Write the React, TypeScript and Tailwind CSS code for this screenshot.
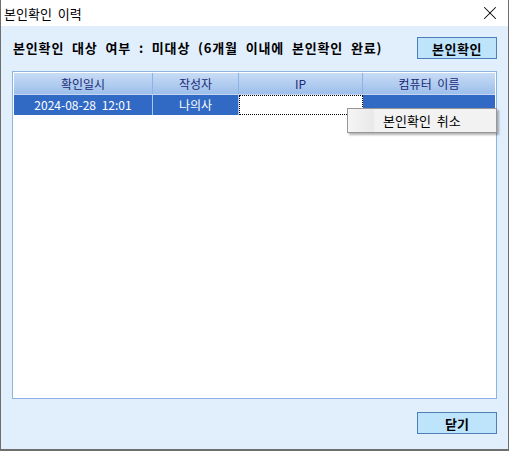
import { X } from 'lucide-react';

const font = { fontFamily: '"Noto Sans CJK KR", "Liberation Sans", sans-serif' };

export default function App() {
  const columns = [
    { label: '확인일시', width: 'w-[139px]' },
    { label: '작성자', width: 'w-[86px]' },
    { label: 'IP', width: 'w-[124px]' },
    { label: '컴퓨터 이름', width: 'flex-1' },
  ];

  return (
    <div
      className="w-[509px] h-[451px] flex flex-col bg-white border border-t-0 border-[#6e6e6e] text-black [word-spacing:3px]"
      style={font}
    >
      {/* Title bar */}
      <div className="h-[26px] flex items-center justify-between pl-[3px] pr-[7px] bg-white">
        <span className="text-[13px] leading-none">본인확인 이력</span>
        <X className="w-[22px] h-[22px] text-black" strokeWidth={1.1} />
      </div>

      {/* Body */}
      <div className="flex-1 flex flex-col bg-[#e1eefc] border-b border-[#6e6e6e] px-[11px]">
        <div className="flex items-center justify-between mt-[11px] h-[22px]">
          <span className="ml-[1px] text-[13px] font-bold tracking-[0.85px] [word-spacing:4px]">
            본인확인 대상 여부 : 미대상 (6개월 이내에 본인확인 완료)
          </span>
          <button className="w-[80px] h-[22px] bg-[#bde4fb] border border-[#4f7eb8] text-[13px] font-bold leading-none tracking-[0.5px]">
            본인확인
          </button>
        </div>

        {/* Grid */}
        <div className="relative mt-[12px] h-[328px] border border-[#8db2e4] p-px bg-white">
          <div className="flex h-[22px] bg-gradient-to-b from-[#c8dcf5] to-[#9dbfeb] border-b border-[#c3d7f2]">
            {columns.map((c, i) => (
              <div
                key={c.label}
                className={`${c.width} flex items-center justify-center text-[12px] text-[#1b2a78] ${i < 3 ? 'border-r border-[#8db2e4]' : ''}`}
              >
                {c.label}
              </div>
            ))}
          </div>
          <div className="flex h-[20px] text-[12px] text-white">
            <div className="w-[139px] flex items-center justify-center bg-[#316ac5] border-r border-[#a9c6ef]">
              2024-08-28 12:01
            </div>
            <div className="w-[86px] flex items-center justify-center bg-[#316ac5] border-r border-[#a9c6ef]">
              나의사
            </div>
            <div className="w-[124px] bg-white border border-dotted border-black" />
            <div className="flex-1 bg-[#316ac5]" />
          </div>

          {/* Context menu */}
          <div className="absolute left-[334px] top-[36px] w-[150px] h-[25px] flex bg-[#f2f2f2] border border-[#979797] shadow-[2px_2px_2px_rgba(0,0,0,0.3)]">
            <div className="w-[26px] bg-gradient-to-r from-[#f5f5f5] to-[#e9e9e9]" />
            <div className="flex items-center pl-[9px] text-[13px]">본인확인 취소</div>
          </div>
        </div>

        <div className="flex justify-end mt-[13px]">
          <button className="w-[80px] h-[22px] bg-[#bde4fb] border border-[#4f7eb8] text-[13px] font-bold leading-none">
            닫기
          </button>
        </div>
      </div>
    </div>
  );
}
